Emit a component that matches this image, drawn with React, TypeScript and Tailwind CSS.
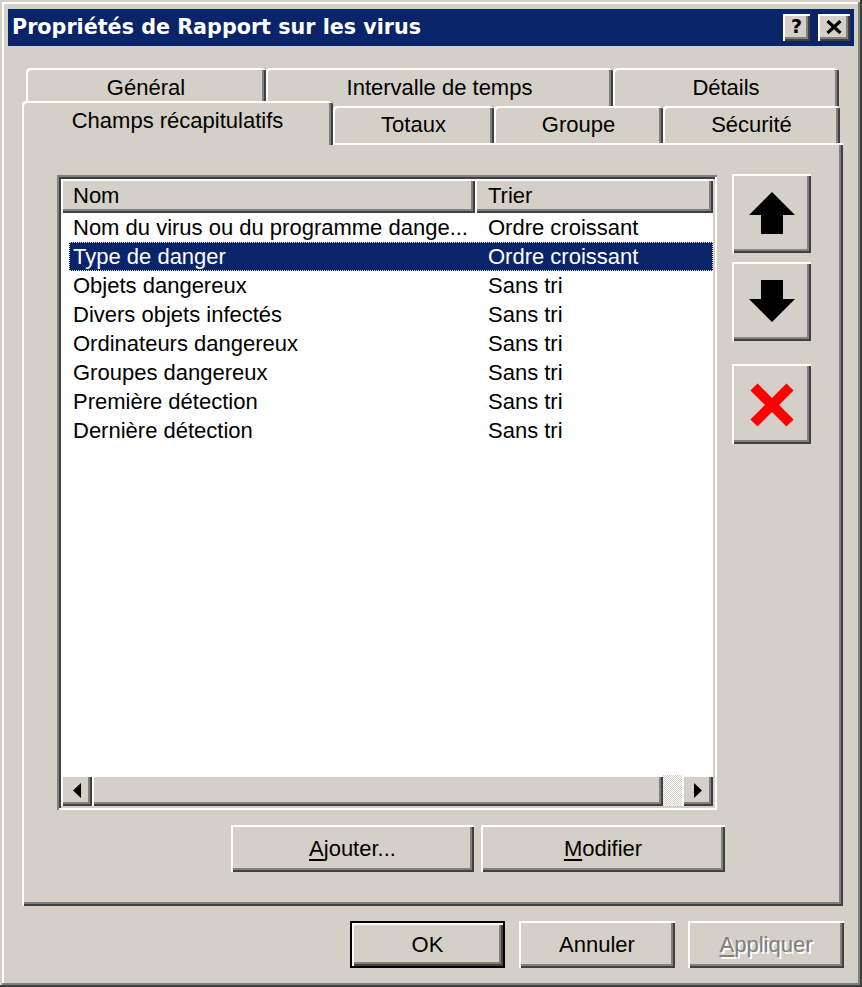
import React from "react";

// Win2000-style raised / sunken edges (2x scale)
const raised =
  "shadow-[inset_2px_2px_0_#ffffff,inset_-2px_-2px_0_#404040,inset_-4px_-4px_0_#808080]";
const tabEdge =
  "rounded-t-[4px] shadow-[inset_2px_2px_0_#ffffff,inset_-2px_0_0_#404040,inset_-4px_0_0_#808080]";

const rows: [string, string][] = [
  ["Nom du virus ou du programme dange...", "Ordre croissant"],
  ["Type de danger", "Ordre croissant"],
  ["Objets dangereux", "Sans tri"],
  ["Divers objets infectés", "Sans tri"],
  ["Ordinateurs dangereux", "Sans tri"],
  ["Groupes dangereux", "Sans tri"],
  ["Première détection", "Sans tri"],
  ["Dernière détection", "Sans tri"],
];

function Button({
  children,
  className = "",
  isDefault = false,
}: {
  children: React.ReactNode;
  className?: string;
  isDefault?: boolean;
}) {
  return (
    <div
      className={`flex items-center justify-center bg-[#d4d0c8] ${raised} ${
        isDefault ? "border-2 border-black" : ""
      } ${className}`}
    >
      {children}
    </div>
  );
}

function Tab({ label, width, selected = false }: { label: string; width: string; selected?: boolean }) {
  return (
    <div
      className={`flex shrink-0 items-center justify-center bg-[#d4d0c8] ${tabEdge} ${width} ${
        selected ? "relative z-10 -mb-[2px] h-[44px] pb-[4px]" : "h-full pt-[1px]"
      }`}
    >
      {label}
    </div>
  );
}

function UpArrow() {
  return (
    <svg width="48" height="43" viewBox="0 0 48 43">
      <polygon points="24,0 47,23 35,23 35,42 13,42 13,23 1,23" fill="#000" />
    </svg>
  );
}

function DownArrow() {
  return (
    <svg width="48" height="43" viewBox="0 0 48 43">
      <polygon points="13,0 35,0 35,19 47,19 24,42 1,19 13,19" fill="#000" />
    </svg>
  );
}

function RedCross() {
  return (
    <svg width="44" height="44" viewBox="0 0 44 44">
      <path d="M4 4 L40 40 M40 4 L4 40" stroke="#ff0000" strokeWidth="10" />
    </svg>
  );
}

export default function App() {
  return (
    <div
      className="flex h-[987px] w-[862px] flex-col bg-[#d4d0c8] px-[8px] pt-[9px] text-[22px] leading-none text-black shadow-[inset_-2px_-2px_0_#404040,inset_2px_2px_0_#d4d0c8,inset_-4px_-4px_0_#808080,inset_4px_4px_0_#ffffff]"
      style={{ fontFamily: '"Liberation Sans", Arial, sans-serif' }}
    >
      {/* Title bar */}
      <div className="flex h-[37px] items-center justify-between bg-[#0a246a] pl-[4px] pr-[4px]">
        <span
          className="text-[20.7px] font-bold text-white"
          style={{ fontFamily: '"DejaVu Sans", Verdana, sans-serif' }}
        >
          Propriétés de Rapport sur les virus
        </span>
        <div className="flex items-center gap-[8px]">
          <Button className="h-[27px] w-[27px] pb-[2px] text-[19px] font-bold">
            <span style={{ fontFamily: '"DejaVu Sans", Verdana, sans-serif' }}>?</span>
          </Button>
          <Button className="h-[27px] w-[32px] pb-[1px]">
            <svg width="16" height="14" viewBox="0 0 16 14">
              <path d="M1.5 1 L14.5 13 M14.5 1 L1.5 13" stroke="#000" strokeWidth="3.2" />
            </svg>
          </Button>
        </div>
      </div>

      {/* Tabs */}
      <div className="ml-[14px] mt-[22px] flex flex-col">
        <div className="ml-[4px] flex h-[38px]">
          <Tab label="Général" width="w-[240px]" />
          <Tab label="Intervalle de temps" width="w-[347px]" />
          <Tab label="Détails" width="w-[226px]" />
        </div>
        <div className="flex h-[37px] items-end">
          <Tab label="Champs récapitulatifs" width="w-[311px]" selected />
          <Tab label="Totaux" width="w-[161px]" />
          <Tab label="Groupe" width="w-[169px]" />
          <Tab label="Sécurité" width="w-[177px]" />
        </div>

        {/* Tab panel */}
        <div className={`flex h-[763px] w-[821px] flex-col bg-[#d4d0c8] pl-[35px] pt-[32px] ${raised}`}>
          <div className="flex items-start">
            {/* List view */}
            <div className="flex h-[635px] w-[660px] flex-col bg-white p-[4px] shadow-[inset_2px_2px_0_#808080,inset_-2px_-2px_0_#ffffff,inset_4px_4px_0_#404040,inset_-4px_-4px_0_#d4d0c8]">
              <div className="flex h-[34px] shrink-0">
                <div className={`flex w-[414px] items-center bg-[#d4d0c8] pl-[12px] ${raised}`}>Nom</div>
                <div className={`flex flex-1 items-center bg-[#d4d0c8] pl-[13px] ${raised}`}>Trier</div>
              </div>
              <div className="flex-1">
                {rows.map(([name, sort], i) => {
                  const selected = i === 1;
                  return (
                    <div key={i} className="flex h-[29px] pl-[8px]">
                      <div
                        className={`flex flex-1 items-center ${
                          selected
                            ? "bg-[#0a246a] text-white outline-1 -outline-offset-1 outline-dotted outline-[#e8e0a8]"
                            : ""
                        }`}
                      >
                        <div className="w-[406px] whitespace-nowrap pl-[4px]">{name}</div>
                        <div className="whitespace-nowrap pl-[13px]">{sort}</div>
                      </div>
                    </div>
                  );
                })}
              </div>
              {/* Horizontal scrollbar */}
              <div className="flex h-[31px] shrink-0">
                <Button className="w-[31px] shrink-0">
                  <svg width="8" height="15" viewBox="0 0 8 15">
                    <polygon points="8,0 0,7.5 8,15" fill="#000" />
                  </svg>
                </Button>
                <div className={`w-[571px] shrink-0 bg-[#d4d0c8] ${raised}`} />
                <div className="flex-1 bg-[repeating-conic-gradient(#ffffff_0_25%,#d4d0c8_0_50%)] bg-[length:2px_2px]" />
                <Button className="w-[31px] shrink-0">
                  <svg width="8" height="15" viewBox="0 0 8 15">
                    <polygon points="0,0 8,7.5 0,15" fill="#000" />
                  </svg>
                </Button>
              </div>
            </div>

            {/* Move / delete buttons */}
            <div className="-mt-[1px] ml-[15px] flex flex-col">
              <Button className="h-[79px] w-[79px]">
                <UpArrow />
              </Button>
              <Button className="mt-[9px] h-[79px] w-[79px]">
                <DownArrow />
              </Button>
              <Button className="mt-[23px] h-[80px] w-[79px] pt-[2px]">
                <RedCross />
              </Button>
            </div>
          </div>

          <div className="ml-[174px] mt-[15px] flex gap-[7px]">
            <Button className="h-[47px] w-[243px]">
              <span>
                <span className="underline decoration-2 underline-offset-[3px]">A</span>jouter...
              </span>
            </Button>
            <Button className="h-[47px] w-[244px]">
              <span>
                <span className="underline decoration-2 underline-offset-[3px]">M</span>odifier
              </span>
            </Button>
          </div>
        </div>
      </div>

      {/* Dialog buttons */}
      <div className="mt-[15px] flex justify-end pr-[10px]">
        <Button isDefault className="h-[47px] w-[155px]">
          OK
        </Button>
        <Button className="ml-[14px] h-[47px] w-[156px]">Annuler</Button>
        <Button className="ml-[13px] h-[47px] w-[156px] text-[#808080] [text-shadow:2px_2px_0_#ffffff]">
          <span>
            <span className="underline decoration-2 underline-offset-[3px]">A</span>ppliquer
          </span>
        </Button>
      </div>
    </div>
  );
}
